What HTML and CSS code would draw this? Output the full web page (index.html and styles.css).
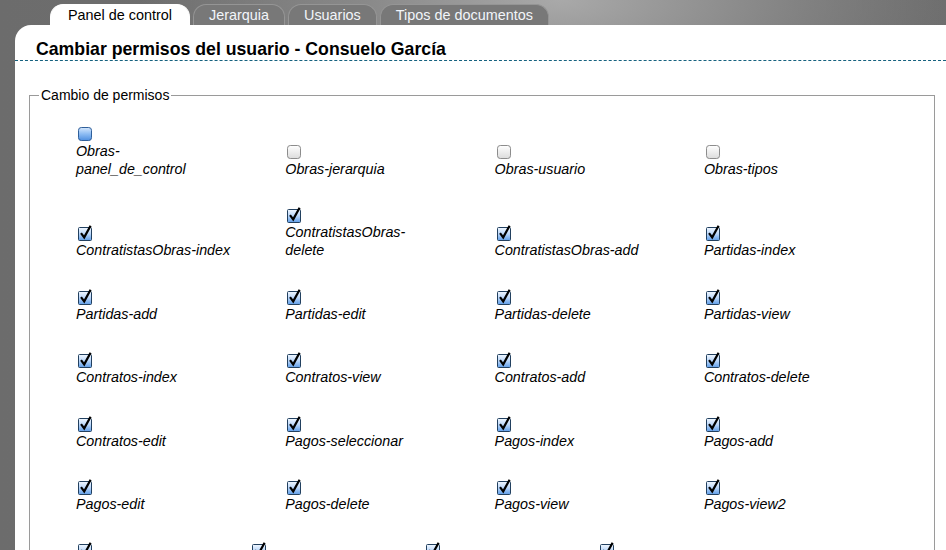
FILE: index.html
```html
<!DOCTYPE html>
<html lang="es">
<head>
<meta charset="utf-8">
<title>Cambiar permisos</title>
<link rel="stylesheet" href="styles.css">
</head>
<body>
<svg width="0" height="0" class="defs">
  <defs>
    <linearGradient id="gChk" x1="0" y1="0" x2="0" y2="1">
      <stop offset="0" stop-color="#f2f8ff"/>
      <stop offset="0.5" stop-color="#b9d6fa"/>
      <stop offset="1" stop-color="#5e9de8"/>
    </linearGradient>
    <linearGradient id="gOff" x1="0" y1="0" x2="0" y2="1">
      <stop offset="0" stop-color="#ffffff"/>
      <stop offset="1" stop-color="#dcdcdc"/>
    </linearGradient>
    <linearGradient id="gBlue" x1="0" y1="0" x2="0" y2="1">
      <stop offset="0" stop-color="#d6e8fd"/>
      <stop offset="0.5" stop-color="#8dbcf3"/>
      <stop offset="1" stop-color="#4f8fe0"/>
    </linearGradient>
    <symbol id="cb-on" viewBox="0 0 16 16">
      <rect x="1.5" y="2.5" width="13" height="13" rx="1" fill="url(#gChk)" stroke="#22405f"/>
      <path d="M4 8.2 L7.2 12.4 L13.6 0.8" fill="none" stroke="#000" stroke-width="2.2" stroke-linejoin="miter"/>
    </symbol>
    <symbol id="cb-off" viewBox="0 0 16 16">
      <rect x="1.5" y="1.5" width="13" height="13" rx="2.8" fill="url(#gOff)" stroke="#8c8c8c"/>
    </symbol>
    <symbol id="cb-blue" viewBox="0 0 16 16">
      <rect x="1.5" y="1.5" width="13" height="13" rx="2.8" fill="url(#gBlue)" stroke="#2f5f9a"/>
    </symbol>
  </defs>
</svg>

<nav class="tabs">
  <a class="tab active">Panel de control</a>
  <a class="tab">Jerarquia</a>
  <a class="tab">Usuarios</a>
  <a class="tab">Tipos de documentos</a>
</nav>

<main class="panel">
  <h1 class="title">Cambiar permisos del usuario - Consuelo García</h1>

  <fieldset class="perms">
    <legend>Cambio de permisos</legend>
    <div class="rows">
      <div class="row">
        <label class="cell"><svg class="cb"><use href="#cb-blue"/></svg><span>Obras-<br>panel_de_control</span></label>
        <label class="cell"><svg class="cb"><use href="#cb-off"/></svg><span>Obras-jerarquia</span></label>
        <label class="cell"><svg class="cb"><use href="#cb-off"/></svg><span>Obras-usuario</span></label>
        <label class="cell"><svg class="cb"><use href="#cb-off"/></svg><span>Obras-tipos</span></label>
      </div>
      <div class="row">
        <label class="cell"><svg class="cb"><use href="#cb-on"/></svg><span>ContratistasObras-index</span></label>
        <label class="cell"><svg class="cb"><use href="#cb-on"/></svg><span>ContratistasObras-<br>delete</span></label>
        <label class="cell"><svg class="cb"><use href="#cb-on"/></svg><span>ContratistasObras-add</span></label>
        <label class="cell"><svg class="cb"><use href="#cb-on"/></svg><span>Partidas-index</span></label>
      </div>
      <div class="row">
        <label class="cell"><svg class="cb"><use href="#cb-on"/></svg><span>Partidas-add</span></label>
        <label class="cell"><svg class="cb"><use href="#cb-on"/></svg><span>Partidas-edit</span></label>
        <label class="cell"><svg class="cb"><use href="#cb-on"/></svg><span>Partidas-delete</span></label>
        <label class="cell"><svg class="cb"><use href="#cb-on"/></svg><span>Partidas-view</span></label>
      </div>
      <div class="row">
        <label class="cell"><svg class="cb"><use href="#cb-on"/></svg><span>Contratos-index</span></label>
        <label class="cell"><svg class="cb"><use href="#cb-on"/></svg><span>Contratos-view</span></label>
        <label class="cell"><svg class="cb"><use href="#cb-on"/></svg><span>Contratos-add</span></label>
        <label class="cell"><svg class="cb"><use href="#cb-on"/></svg><span>Contratos-delete</span></label>
      </div>
      <div class="row">
        <label class="cell"><svg class="cb"><use href="#cb-on"/></svg><span>Contratos-edit</span></label>
        <label class="cell"><svg class="cb"><use href="#cb-on"/></svg><span>Pagos-seleccionar</span></label>
        <label class="cell"><svg class="cb"><use href="#cb-on"/></svg><span>Pagos-index</span></label>
        <label class="cell"><svg class="cb"><use href="#cb-on"/></svg><span>Pagos-add</span></label>
      </div>
      <div class="row">
        <label class="cell"><svg class="cb"><use href="#cb-on"/></svg><span>Pagos-edit</span></label>
        <label class="cell"><svg class="cb"><use href="#cb-on"/></svg><span>Pagos-delete</span></label>
        <label class="cell"><svg class="cb"><use href="#cb-on"/></svg><span>Pagos-view</span></label>
        <label class="cell"><svg class="cb"><use href="#cb-on"/></svg><span>Pagos-view2</span></label>
      </div>
      <div class="row narrow">
        <label class="cell"><svg class="cb"><use href="#cb-on"/></svg></label>
        <label class="cell"><svg class="cb"><use href="#cb-on"/></svg></label>
        <label class="cell"><svg class="cb"><use href="#cb-on"/></svg></label>
        <label class="cell"><svg class="cb"><use href="#cb-on"/></svg></label>
      </div>
    </div>
  </fieldset>
</main>
</body>
</html>
```

FILE: styles.css
```css
html, body {
  margin: 0;
  padding: 0;
  height: 100%;
  overflow: hidden;
}

body {
  font-family: "Liberation Sans", Arial, sans-serif;
  background:
    radial-gradient(ellipse 420px 160px at 560px 0px, #a9a9a9 0%, #8a8a8a 45%, rgba(100,100,100,0) 100%),
    linear-gradient(90deg, #6c6c6c 0%, #6f6f6f 30%, #636363 75%, #6a6a6a 100%);
  color: #000;
}

.defs {
  position: absolute;
  width: 0;
  height: 0;
}

.tabs {
  display: flex;
  gap: 3px;
  padding: 4px 0 0 50px;
  height: 21px;
}

.tab {
  display: block;
  height: 21px;
  box-sizing: border-box;
  padding: 2px 15px 0;
  font-size: 14.4px;
  line-height: 17px;
  color: #f2f5fa;
  background: #787878;
  border: 1px solid #959595;
  border-bottom: none;
  border-radius: 13px 13px 0 0;
  white-space: nowrap;
}

.tab.active {
  background: #ffffff;
  color: #000;
  border-color: #ffffff;
  padding: 2px 17px 0;
}

.panel {
  margin-left: 15px;
  background: #ffffff;
  border-top-left-radius: 16px;
  height: 600px;
  padding-top: 15px;
}

.title {
  margin: 0;
  padding: 0 0 1px 21px;
  font-size: 17.7px;
  line-height: 19px;
  font-weight: bold;
  color: #000;
  border-bottom: 1px dashed #16627f;
}

.perms {
  margin: 26px 11px 0 14px;
  padding: 23px 0 0 0;
  border: 1px solid #9a9a9a;
  min-inline-size: 0;
}

.perms legend {
  font-size: 14px;
  padding: 0 2px;
  margin-left: 9px;
  color: #000;
}

.rows {
  display: flex;
  flex-direction: column;
  gap: 29.4px;
  padding-left: 46px;
}

.row {
  display: grid;
  grid-template-columns: repeat(4, 209.3px);
  align-items: end;
}

.row.narrow {
  grid-template-columns: repeat(4, 174px);
}

.cell {
  display: flex;
  flex-direction: column;
  align-items: flex-start;
  font-size: 14.3px;
  font-style: italic;
  line-height: 18px;
  color: #000;
}

.cb {
  display: block;
  width: 16px;
  height: 16px;
  margin: 0 0 0 1px;
}
```
